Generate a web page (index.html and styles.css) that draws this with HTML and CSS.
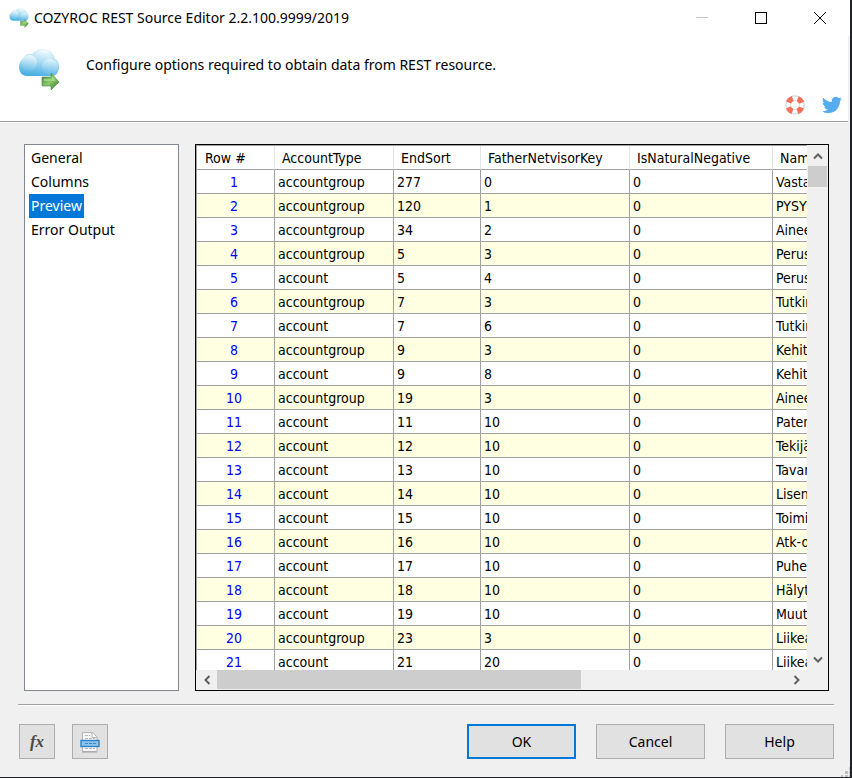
FILE: index.html
```html
<!DOCTYPE html>
<html lang="en">
  <head>
    <meta charset="UTF-8" />
    <meta name="viewport" content="width=device-width, initial-scale=1.0" />
    <title>COZYROC REST Source Editor</title>
    <link rel="stylesheet" href="styles.css">
  </head>
  <body>
    <!-- Shared icon drawings -->
    <svg class="defs" aria-hidden="true">
      <defs>
        <linearGradient id="cloudFill" x1="0.6" y1="0" x2="0.4" y2="1">
          <stop offset="0" stop-color="#e6f5fb" />
          <stop offset="0.45" stop-color="#a5daf2" />
          <stop offset="1" stop-color="#47aee2" />
        </linearGradient>
        <linearGradient id="puffFill" x1="0.6" y1="0" x2="0.4" y2="1">
          <stop offset="0" stop-color="#ffffff" stop-opacity="0.8" />
          <stop offset="1" stop-color="#8fd0ef" stop-opacity="0.2" />
        </linearGradient>
        <linearGradient id="arrowFill" x1="0" y1="0" x2="1" y2="1">
          <stop offset="0" stop-color="#3f7f35" />
          <stop offset="0.5" stop-color="#8ccb6c" />
          <stop offset="1" stop-color="#2f6f2b" />
        </linearGradient>
      </defs>
      <symbol id="cloud" viewBox="0 0 42 42">
        <path fill="url(#cloudFill)" d="M9 27C4 27 1 23 1 18c0-4 2-7 4-8 1-4 5-6 9-5 2-3 6-5 10-5 7 0 12 4 13 10 3 1 4 4 4 8 0 5-3 9-7 9z" />
        <circle fill="url(#puffFill)" cx="25" cy="10" r="9" />
        <circle fill="url(#puffFill)" cx="11" cy="14" r="8" />
        <circle fill="url(#puffFill)" cx="32" cy="18" r="8" opacity="0.7" />
        <path fill="url(#arrowFill)" stroke="#4c8d40" stroke-width="0.6" d="M24 28h9v-4l8 9-8 8v-4h-9z" />
        <path fill="#a9dc8a" opacity="0.8" d="M26 30h8v-3l4 5H26z" />
      </symbol>
    </svg>

    <div class="window">
      <header class="titlebar">
        <svg class="app-icon"><use href="#cloud" /></svg>
        <h1>COZYROC REST Source Editor 2.2.100.9999/2019</h1>
        <div class="window-buttons">
          <button type="button" aria-label="Minimize" disabled>
            <svg width="12" height="12"><path d="M0 5.5h12" stroke="#c4c4c4" /></svg>
          </button>
          <button type="button" aria-label="Maximize">
            <svg width="12" height="12"><rect x="0.5" y="0.5" width="11" height="11" fill="none" stroke="#000" /></svg>
          </button>
          <button type="button" aria-label="Close">
            <svg width="12" height="12"><path d="M0 0l12 12M12 0L0 12" stroke="#000" /></svg>
          </button>
        </div>
      </header>

      <section class="banner">
        <svg class="banner-icon"><use href="#cloud" /></svg>
        <p>Configure options required to obtain data from REST resource.</p>
        <nav class="links">
          <a href="#support" aria-label="Support">
            <svg width="20" height="20" viewBox="0 0 20 20">
              <circle cx="10" cy="10" r="7" fill="none" stroke="#dde1e5" stroke-width="6" />
              <circle cx="10" cy="10" r="6.6" fill="none" stroke="#fff" stroke-width="3.4" />
              <circle cx="10" cy="10" r="6.9" fill="none" stroke="#f4705a" stroke-width="5.4" stroke-dasharray="5.800 5.038" stroke-dashoffset="-2.519" />
            </svg>
          </a>
          <a href="#twitter" aria-label="Twitter">
            <svg width="20" height="20" viewBox="0 0 24 24">
              <path fill="#55acee" d="M23.95 4.57a10 10 0 0 1-2.82.77 4.96 4.96 0 0 0 2.16-2.72c-.95.55-2 .96-3.13 1.18a4.92 4.92 0 0 0-8.38 4.48C7.69 8.1 4.07 6.13 1.64 3.16a4.92 4.92 0 0 0 1.52 6.57 4.9 4.9 0 0 1-2.23-.61v.06c0 2.38 1.7 4.37 3.95 4.82a5 5 0 0 1-2.21.09 4.94 4.94 0 0 0 4.6 3.42A9.87 9.87 0 0 1 0 19.54a13.94 13.94 0 0 0 7.55 2.21c9.05 0 14-7.5 14-13.98 0-.21 0-.42-.02-.63a9.94 9.94 0 0 0 2.46-2.55z" />
            </svg>
          </a>
        </nav>
      </section>

      <main class="content">
        <nav class="pages">
          <a href="#general">General</a>
          <a href="#columns">Columns</a>
          <a href="#preview" class="selected" aria-current="page">Preview</a>
          <a href="#error-output">Error Output</a>
        </nav>

        <div class="preview">
          <div class="viewport">
            <table>
              <colgroup>
                <col class="col-row"><col class="col-type"><col class="col-sort"><col class="col-father"><col class="col-negative"><col class="col-name">
              </colgroup>
              <thead>
                <tr><th>Row #</th><th>AccountType</th><th>EndSort</th><th>FatherNetvisorKey</th><th>IsNaturalNegative</th><th>Name</th></tr>
              </thead>
              <tbody>
                <tr><td>1</td><td>accountgroup</td><td>277</td><td>0</td><td>0</td><td>Vastaavaa</td></tr>
                <tr><td>2</td><td>accountgroup</td><td>120</td><td>1</td><td>0</td><td>PYSYVÄT</td></tr>
                <tr><td>3</td><td>accountgroup</td><td>34</td><td>2</td><td>0</td><td>Aineettomat</td></tr>
                <tr><td>4</td><td>accountgroup</td><td>5</td><td>3</td><td>0</td><td>Perustamismenot</td></tr>
                <tr><td>5</td><td>account</td><td>5</td><td>4</td><td>0</td><td>Perustamismenot</td></tr>
                <tr><td>6</td><td>accountgroup</td><td>7</td><td>3</td><td>0</td><td>Tutkimusmenot</td></tr>
                <tr><td>7</td><td>account</td><td>7</td><td>6</td><td>0</td><td>Tutkimusmenot</td></tr>
                <tr><td>8</td><td>accountgroup</td><td>9</td><td>3</td><td>0</td><td>Kehittämismenot</td></tr>
                <tr><td>9</td><td>account</td><td>9</td><td>8</td><td>0</td><td>Kehittämismenot</td></tr>
                <tr><td>10</td><td>accountgroup</td><td>19</td><td>3</td><td>0</td><td>Aineettomat</td></tr>
                <tr><td>11</td><td>account</td><td>11</td><td>10</td><td>0</td><td>Patentit</td></tr>
                <tr><td>12</td><td>account</td><td>12</td><td>10</td><td>0</td><td>Tekijänoikeudet</td></tr>
                <tr><td>13</td><td>account</td><td>13</td><td>10</td><td>0</td><td>Tavaramerkit</td></tr>
                <tr><td>14</td><td>account</td><td>14</td><td>10</td><td>0</td><td>Lisenssit</td></tr>
                <tr><td>15</td><td>account</td><td>15</td><td>10</td><td>0</td><td>Toimiluvat</td></tr>
                <tr><td>16</td><td>account</td><td>16</td><td>10</td><td>0</td><td>Atk-ohjelmat</td></tr>
                <tr><td>17</td><td>account</td><td>17</td><td>10</td><td>0</td><td>Puhelinliittymät</td></tr>
                <tr><td>18</td><td>account</td><td>18</td><td>10</td><td>0</td><td>Hälytysliittymät</td></tr>
                <tr><td>19</td><td>account</td><td>19</td><td>10</td><td>0</td><td>Muut</td></tr>
                <tr><td>20</td><td>accountgroup</td><td>23</td><td>3</td><td>0</td><td>Liikearvo</td></tr>
                <tr><td>21</td><td>account</td><td>21</td><td>20</td><td>0</td><td>Liikearvo</td></tr>
              </tbody>
            </table>
          </div>
          <div class="scrollbar vertical">
            <button type="button" aria-label="Scroll up">
              <svg width="10" height="8"><path d="M1 6.5l4-4 4 4" /></svg>
            </button>
            <div class="track"><div class="thumb"></div></div>
            <button type="button" aria-label="Scroll down">
              <svg width="10" height="8"><path d="M1 1.5l4 4 4-4" /></svg>
            </button>
          </div>
          <div class="scrollbar horizontal">
            <button type="button" aria-label="Scroll left">
              <svg width="8" height="10"><path d="M6.5 1l-4 4 4 4" /></svg>
            </button>
            <div class="track"><div class="thumb"></div></div>
            <button type="button" aria-label="Scroll right">
              <svg width="8" height="10"><path d="M1.5 1l4 4-4 4" /></svg>
            </button>
          </div>
        </div>
      </main>

      <footer class="actions">
        <button type="button" class="tool fx" aria-label="Expressions"><i>fx</i></button>
        <button type="button" class="tool" aria-label="View source">
          <svg width="20" height="22" viewBox="0 0 20 22">
            <path d="M2.5 1.5h10l4.500 4.500v14.500h-14.500z" fill="#f6f6f6" stroke="#b4b4b4" />
            <path d="M2 21h15" stroke="#a0a0a0" />
            <path d="M12 2v4.500h4.500" fill="#fff" stroke="#b4b4b4" />
            <path d="M5 4.500h5M5 7.500h10M5 17.500h10" stroke="#b9b9b9" stroke-dasharray="3 1" />
            <rect x="1" y="9.500" width="18" height="6" fill="#8cc4ee" stroke="#2f83c6" stroke-width="1.400" />
            <path d="M5 12.500h11" stroke="#3d87c0" stroke-dasharray="3 1" />
          </svg>
        </button>
        <div class="dialog-buttons">
          <button type="submit" class="default">OK</button>
          <button type="button">Cancel</button>
          <button type="button">Help</button>
        </div>
        <svg class="grip" width="10" height="10" aria-hidden="true">
          <path fill="#bfbfbf" d="M1 8h2v2H1zM5 8h3v2H5zM9 8h1v2H9zM5 4h3v3H5zM9 4h1v3H9zM9 0h1v3H9z" />
        </svg>
      </footer>
    </div>
  </body>
</html>
```
FILE: styles.css
```css
* {
  box-sizing: border-box;
}
body {
  margin: 0;
  background: #f0f0f0;
  color: #000;
  font: 14px/24px "Noto Sans", "Segoe UI", sans-serif;
}
button {
  padding: 0;
  font: inherit;
  color: inherit;
}
svg {
  display: block;
}
.defs {
  position: absolute;
  width: 0;
  height: 0;
}
.window {
  display: flex;
  flex-direction: column;
  height: 100vh;
  border-right: 2px solid #222326;
  border-bottom: 1px solid #222326;
}

/* Title bar */
.titlebar {
  display: flex;
  align-items: center;
  height: 36px;
  padding: 0 1px 0 9px;
  background: #fff;
}
.titlebar h1 {
  flex: 1;
  margin: 0 0 0 5px;
  font-size: 14px;
  font-weight: 400;
}
.app-icon {
  width: 20px;
  height: 20px;
}
.window-buttons {
  display: flex;
  height: 100%;
}
.window-buttons button {
  display: flex;
  align-items: center;
  justify-content: center;
  width: 59px;
  border: none;
  background: none;
}

/* Description strip */
.banner {
  display: flex;
  align-items: flex-start;
  height: 86px;
  margin-right: 2px;
  padding: 13px 6px 0 18px;
  background: #fff;
  border-bottom: 1px solid #a0a0a0;
  box-shadow: 0 1px #fff;
}
.banner-icon {
  width: 42px;
  height: 42px;
}
.banner p {
  flex: 1;
  margin: 4px 0 0 26px;
}
.links {
  display: flex;
  gap: 17px;
  align-self: flex-end;
  padding-bottom: 6px;
}

/* Page list and preview grid */
.content {
  display: flex;
  flex: 1;
  gap: 16px;
  min-height: 0;
  margin: 0 16px 0 18px;
  padding: 22px 5px 13px 6px;
  border-bottom: 1px solid #a0a0a0;
  box-shadow: 0 1px #fff;
}
.pages {
  display: flex;
  flex-direction: column;
  align-items: flex-start;
  width: 155px;
  padding: 1px 4px;
  background: #fff;
  border: 1px solid #828790;
}
.pages a {
  padding: 0 2px;
  color: #000;
  text-decoration: none;
}
.pages .selected {
  background: #0078d7;
  color: #fff;
}
.preview {
  display: grid;
  flex: 1;
  grid-template: 1fr 20px / 1fr 21px;
  min-width: 0;
  border: 1px solid #000;
  background: #f0f0f0;
}
.viewport {
  overflow: hidden;
  min-height: 0;
  background: #fff;
  border-top: 1px solid #a0a0a0;
  border-left: 1px solid #a0a0a0;
}
table {
  width: 684px;
  table-layout: fixed;
  border-collapse: separate;
  border-spacing: 0;
  font-family: "DejaVu Sans Condensed", Tahoma, sans-serif;
}
.col-row {
  width: 78px;
}
.col-type {
  width: 119px;
}
.col-sort {
  width: 87px;
}
.col-father {
  width: 149px;
}
.col-negative {
  width: 143px;
}
th,
td {
  height: 24px;
  padding: 2px 3px 0;
  line-height: 21px;
  text-align: left;
  white-space: nowrap;
  overflow: hidden;
  border-right: 1px solid #a0a0a0;
  border-bottom: 1px solid #a0a0a0;
}
th {
  padding-left: 7px;
  font-weight: 400;
  border-right-color: #e5e5e5;
}
th:first-child {
  padding-left: 8px;
}
td:first-child {
  padding-right: 6px;
  color: #0000ff;
  text-align: center;
}
tbody tr:nth-child(even) {
  background: #ffffe1;
}

/* Scroll bars */
.scrollbar {
  display: flex;
}
.scrollbar button {
  display: flex;
  flex: 0 0 21px;
  align-items: center;
  justify-content: center;
  border: none;
  background: none;
}
.scrollbar path {
  fill: none;
  stroke: #606060;
  stroke-width: 2;
}
.track {
  flex: 1;
}
.thumb {
  background: #cdcdcd;
}
.vertical {
  flex-direction: column;
}
.vertical .thumb {
  width: 19px;
  height: 21px;
  margin-left: 1px;
}
.horizontal .thumb {
  width: 64%;
  height: 19px;
}

/* Bottom buttons */
.actions {
  display: flex;
  gap: 17px;
  padding: 19px 16px 18px 19px;
  position: relative;
}
.actions button {
  height: 35px;
  background: #e1e1e1;
  border: 1px solid #adadad;
}
.actions .tool {
  display: flex;
  align-items: center;
  justify-content: center;
  width: 36px;
}
.fx i {
  color: #4a4a4a;
  font: italic bold 17px "Liberation Serif", serif;
}
.dialog-buttons {
  display: flex;
  gap: 20px;
  margin-left: auto;
}
.dialog-buttons button {
  width: 109px;
}
.dialog-buttons .default {
  border: 2px solid #0078d7;
}
.grip {
  position: absolute;
  right: 0;
  bottom: 0;
}
```
